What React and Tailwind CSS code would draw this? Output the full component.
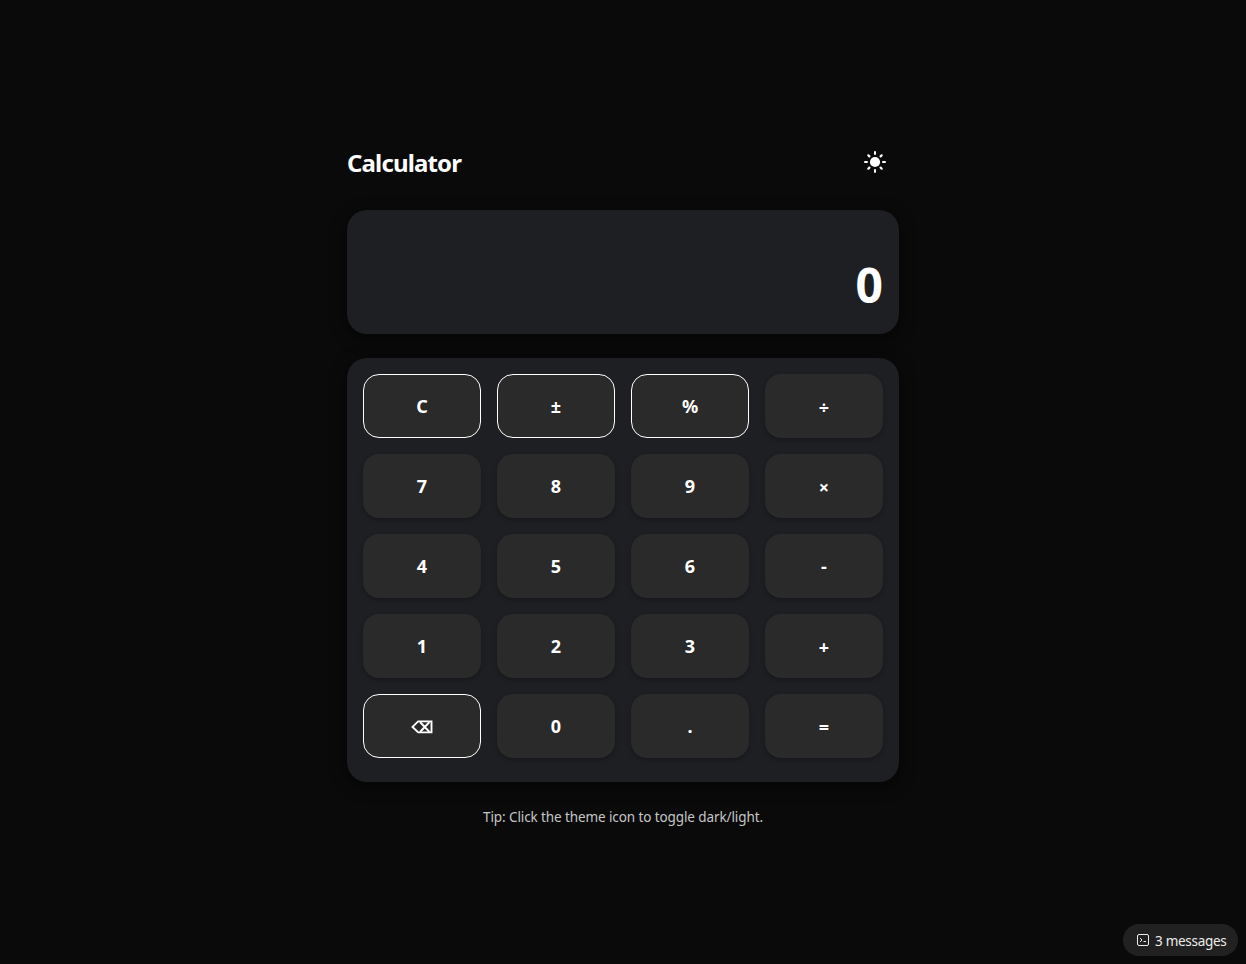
import React from 'react';

const keys = [
  { label: 'C', outlined: true }, { label: '±', outlined: true }, { label: '%', outlined: true }, { label: '÷', low: true },
  { label: '7' }, { label: '8' }, { label: '9' }, { label: '×', low: true },
  { label: '4' }, { label: '5' }, { label: '6' }, { label: '-' },
  { label: '1' }, { label: '2' }, { label: '3' }, { label: '+', low: true },
  { label: 'back', outlined: true }, { label: '0' }, { label: '.' }, { label: '=', low: true },
];

function SunIcon() {
  return (
    <svg viewBox="0 0 24 24" className="size-6" fill="currentColor" stroke="currentColor" strokeWidth="2" strokeLinecap="round">
      <circle cx="12" cy="12" r="5.1" stroke="none" />
      <path d="M2 12h2M20 12h2M12 2v2M12 20v2" />
      <path strokeWidth="2.2" d="M5.3 5.3l1.1 1.1M17.6 17.6l1.1 1.1M18.7 5.3l-1.1 1.1M6.4 17.6L5.3 18.7" />
    </svg>
  );
}

function BackspaceIcon() {
  return (
    <svg viewBox="0 0 22 14" className="mt-px h-3.5 w-[22px]" fill="none" stroke="currentColor" strokeWidth="1.9">
      <path d="M7.2 1.4H20.5V12.4H7.2L1.5 6.9Z" />
      <path d="M9 2l9.5 10M18.5 2L9 12" />
    </svg>
  );
}

function Key({ label, outlined, low }) {
  return (
    <button
      aria-label={label === 'back' ? 'Backspace' : undefined}
      className={
        'flex h-16 items-center justify-center rounded-2xl bg-[#2a2a2a] text-lg leading-7 font-bold text-white ' +
        (outlined ? 'border border-white' : 'shadow-[0_2px_4px_rgba(0,0,0,0.25)]')
      }
    >
      {label === 'back' ? <BackspaceIcon /> : <span className={low ? 'pt-0.5' : ''}>{label}</span>}
    </button>
  );
}

export default function App() {
  return (
    <div className="flex h-[964px] flex-col overflow-hidden bg-[#0a0a0a] font-['Segoe_UI','Noto_Sans',sans-serif] text-white">
      <main className="mx-auto flex w-[552px] flex-col pt-[138px]">
        <header className="flex h-12 items-center justify-between pr-3">
          <h1 className="mt-0.5 text-[24px] leading-8 font-bold tracking-[-0.85px]">Calculator</h1>
          <button aria-label="Toggle theme"><SunIcon /></button>
        </header>
        <section className="mt-6 flex h-[124px] items-end justify-end rounded-[20px] bg-[#1e1f23] px-4 pb-[17px] shadow-[0_4px_16px_rgba(0,0,0,0.6)]">
          <span className="text-[48px] leading-[64px] font-bold">0</span>
        </section>
        <section className="mt-6 grid h-[424px] grid-cols-4 content-start gap-4 rounded-[20px] bg-[#1e1f23] p-4 shadow-[0_4px_16px_rgba(0,0,0,0.6)]">
          {keys.map((key) => <Key key={key.label} {...key} />)}
        </section>
        <p className="mt-[25px] text-center text-[13.5px] leading-5 tracking-[-0.1px] text-[#c6c6c6]">
          Tip: Click the theme icon to toggle dark/light.
        </p>
      </main>
      <footer className="mt-auto flex justify-end pr-2 pb-2">
        <button className="flex h-8 w-[115px] items-center gap-[6px] rounded-full bg-[#212121] pl-[14px] text-[13.5px] tracking-[-0.28px] whitespace-nowrap text-[#ececec]">
          <svg viewBox="0 0 12 12" className="size-3 shrink-0" fill="none" stroke="currentColor">
            <rect x="0.5" y="0.5" width="11" height="11" rx="1.5" />
            <path d="M3 4l2 2-2 2M6.5 7.5H9" />
          </svg>
          <span className="pt-0.5">3 messages</span>
        </button>
      </footer>
    </div>
  );
}
